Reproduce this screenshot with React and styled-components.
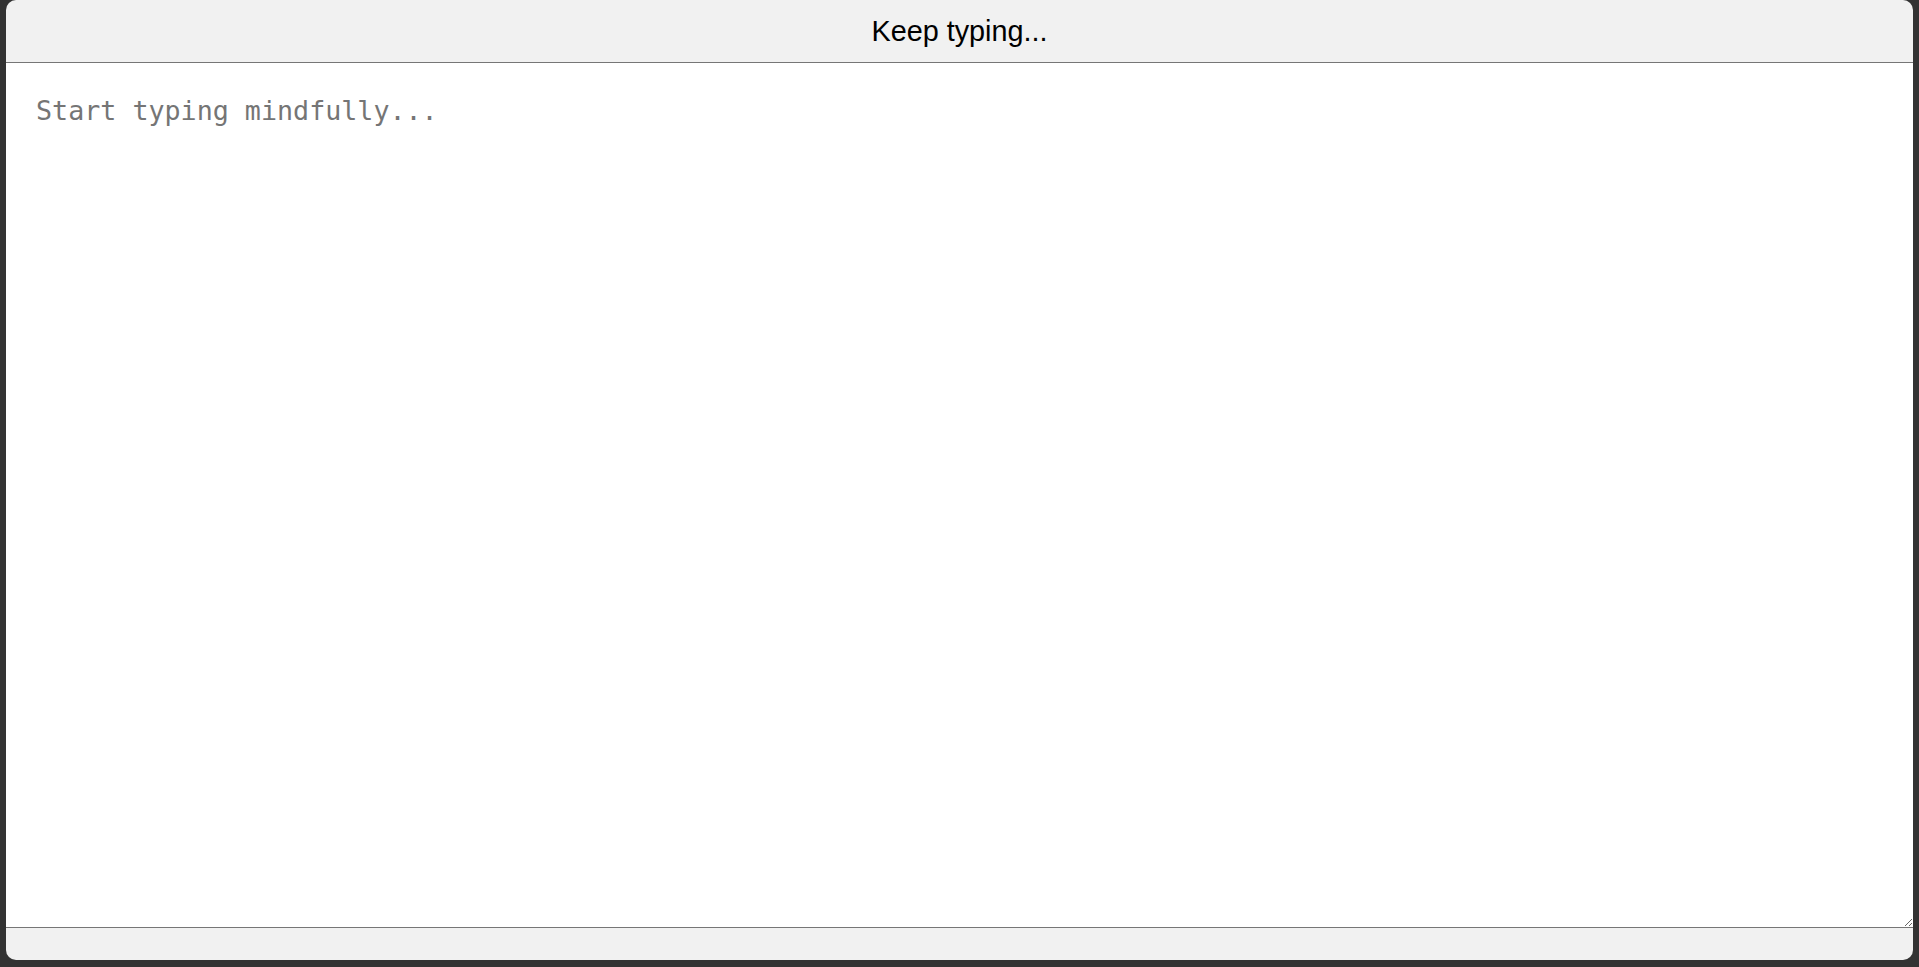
import React, { useState } from 'react'
import styled, { createGlobalStyle } from 'styled-components'

const GlobalStyle = createGlobalStyle`
    html, body {
        margin: 0;
        padding: 0;
        background: #333333;
        height: 100%;
        overflow: hidden;
    }
    #root {
        height: 100%;
    }
`;

function App() {
    const [text, setText] = useState('')

    return (
        <>
            <GlobalStyle />
            <WindowStyled>
                <Header>Keep typing...</Header>
                <Editor
                    value={text}
                    onChange={(e) => setText(e.target.value)}
                    placeholder="Start typing mindfully..."
                />
                <Footer />
            </WindowStyled>
        </>
    )
}

const WindowStyled = styled.div`
    display: flex;
    flex-direction: column;
    height: 960px;
    margin: 0 6px;
    background: #f1f1f1;
    border-radius: 10px;
    overflow: hidden;
`;

const Header = styled.div`
    height: 62px;
    display: flex;
    align-items: center;
    justify-content: center;
    font-family: "Liberation Sans", Arial, sans-serif;
    font-size: 28.8px;
    color: #000;
    flex-shrink: 0;
`;

const Editor = styled.textarea`
    flex: 1;
    display: block;
    width: 100%;
    box-sizing: border-box;
    margin: 0;
    padding: 32px 30px;
    border: none;
    border-top: 1px solid #767676;
    border-bottom: 1px solid #767676;
    border-radius: 0;
    background: #fff;
    outline: none;
    font-family: "DejaVu Sans Mono", "Liberation Mono", monospace;
    font-size: 26.7px;
    color: #222;
    resize: vertical;
    &::placeholder {
        color: #757575;
    }
`;

const Footer = styled.div`
    height: 32px;
    flex-shrink: 0;
`;

export default App
